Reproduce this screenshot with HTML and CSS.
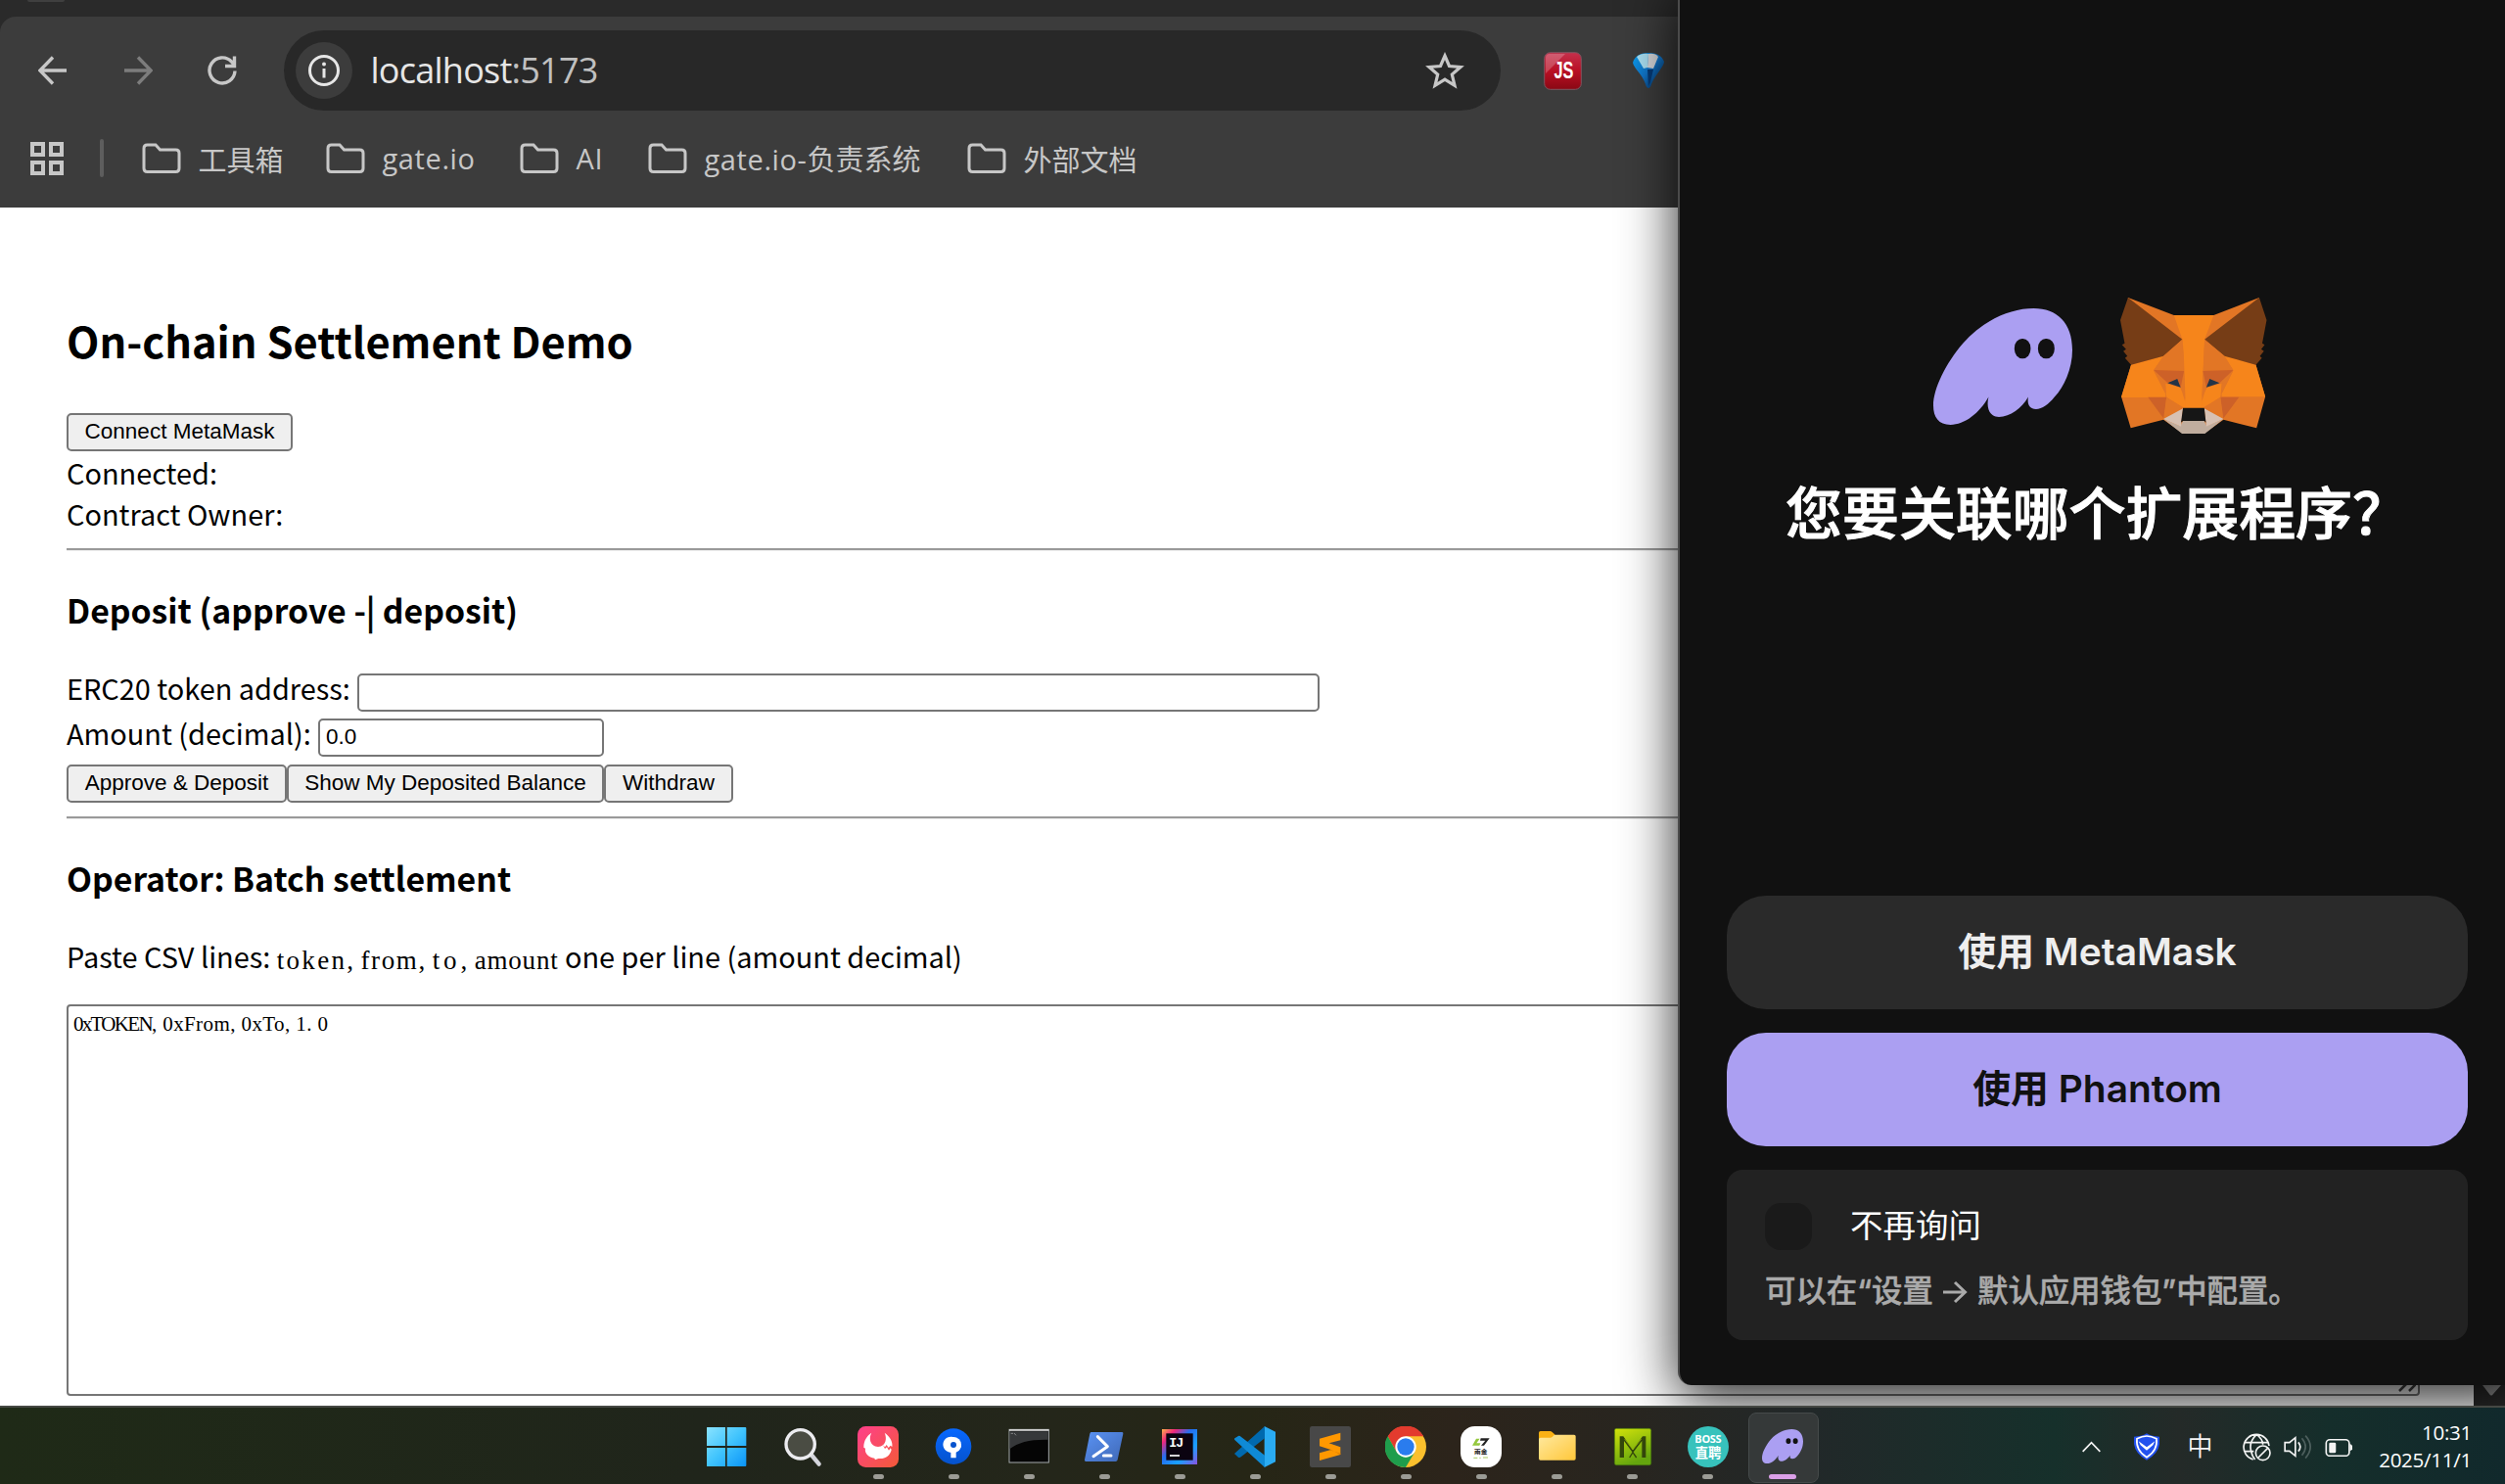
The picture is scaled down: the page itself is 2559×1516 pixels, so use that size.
FILE: index.html
```html
<!DOCTYPE html>
<html lang="zh-CN">
<head>
<meta charset="utf-8">
<title>On-chain Settlement Demo</title>
<link rel="stylesheet" href="styles.css">
</head>
<body>
<svg width="0" height="0" class="defs">
  <defs>
    <symbol id="folder" viewBox="0 0 40 32"><path d="M2 5.5Q2 2 5.5 2H14l4.500 5H34.500Q38 7 38 10.500V26Q38 29.500 34.500 29.500H5.500Q2 29.500 2 26Z" fill="none" stroke="#c7c7c7" stroke-width="3"/></symbol>
    <symbol id="ghost" viewBox="102 105 413 356" preserveAspectRatio="none">
      <path fill="#ab9ff2" d="M102 402C102 350 140 272 190 212C250 142 330 105 400 105C470 105 515 150 515 232C515 290 490 345 462 376C445 398 425 413 407 413C388 413 380 398 384 376C365 410 330 437 297 437C270 437 258 410 266 376C240 425 195 461 153 461C118 461 102 438 102 402Z"/>
      <rect x="343" y="198" width="48" height="60" rx="23" ry="28" fill="#111"/><rect x="413" y="198" width="49" height="60" rx="23" ry="28" fill="#111"/>
    </symbol>
  </defs>
</svg>
<div class="screen">
  <div class="browser">
    <div class="tabstrip"><span class="tabstub"></span></div>
    <header class="chrome">
      <div class="toolbar">
        <svg class="nav" viewBox="0 0 30 30"><path d="M29 15H2M15 1.500L1.800 15L15 28.500" /></svg>
        <svg class="nav off" viewBox="0 0 30 30"><path d="M1 15H28M15 1.500L28.200 15L15 28.500"/></svg>
        <svg class="nav" viewBox="0 0 30 30"><path d="M28 15.500A13 13 0 1 1 24.500 6L27 9M27.500 .5V10.500H18"/></svg>
        <div class="omnibox">
          <span class="info"><svg width="34" height="34" viewBox="0 0 34 34"><circle cx="17" cy="17" r="14.500" fill="none" stroke="#e6e6e6" stroke-width="3"/><path d="M17 15V24.500" stroke="#e6e6e6" stroke-width="3"/><circle cx="17" cy="10.500" r="2" fill="#e6e6e6"/></svg></span>
          <span class="url">localhost<span class="port">:5173</span></span>
          <svg class="star" viewBox="0 0 40 38"><path d="M20 4L24.500 14.500L36 15.500L27.300 23L30 34.300L20 28.200L10 34.300L12.700 23L4 15.500L15.500 14.500Z" fill="none" stroke="#c7c7c7" stroke-width="3.200"/></svg>
        </div>
        <svg class="ext-js" viewBox="0 0 39 39"><defs><linearGradient id="jr" x1="0" y1="0" x2="0" y2="1"><stop offset="0" stop-color="#c4304c"/><stop offset=".5" stop-color="#b90f24"/><stop offset="1" stop-color="#8a0814"/></linearGradient></defs><rect x=".7" y=".7" width="37.600" height="37.600" rx="6" fill="url(#jr)" stroke="#7d5560"/><path d="M2 6Q2 2 6 2H22L2 22Z" fill="#fff" opacity=".22"/><g transform="translate(10.500 27) scale(.68 1)"><text class="js">JS</text></g></svg>
        <svg class="ext-gem" viewBox="0 0 34 36"><defs><linearGradient id="gb" x1="0" y1="0" x2="1" y2="1"><stop offset="0" stop-color="#0a9ff0"/><stop offset=".5" stop-color="#1174c8"/><stop offset="1" stop-color="#02254f"/></linearGradient></defs><path d="M1 10C3 3 9 0 17 0S31 3 33 9C33 14 24 22 20 32Q19 36 17 36T14 32C11 22 2 16 1 10Z" fill="url(#gb)"/><path d="M5 4Q10 0 17 1L16 15L12 16Z" fill="#a9dff2"/><path d="M17 1Q24 0 27 4L22 16L16 15Z" fill="#d5d7da"/><path d="M16 17L22 17L19 30L17 34Z" fill="#063a76"/></svg>
      </div>
      <nav class="bookmarks">
        <svg class="apps" viewBox="0 0 34 34"><path d="M2 2H13V13H2ZM21 2H32V13H21ZM2 21H13V32H2ZM21 21H32V32H21Z" fill="none" stroke="#c7c7c7" stroke-width="4"/></svg>
        <span class="sep"></span>
        <a class="bm b1"><svg><use href="#folder"/></svg><span>工具箱</span></a>
        <a class="bm b2"><svg><use href="#folder"/></svg><span class="lat">gate.io</span></a>
        <a class="bm b3"><svg><use href="#folder"/></svg><span class="lat">AI</span></a>
        <a class="bm b4"><svg><use href="#folder"/></svg><span><i class="lat">gate.io-</i>负责系统</span></a>
        <a class="bm b5"><svg><use href="#folder"/></svg><span>外部文档</span></a>
      </nav>
    </header>
    <main class="page">
      <h2>On-chain Settlement Demo</h2>
      <button class="connect">Connect MetaMask</button>
      <div class="line">Connected:</div>
      <div class="line">Contract Owner:</div>
      <hr>
      <h3>Deposit (approve -<span class="bar">|</span> deposit)</h3>
      <div class="field f1"><label>ERC20 token address:</label><input class="wide" type="text"></div>
      <div class="field f2"><label>Amount (decimal):</label><input type="text" value="0.0"></div>
      <div class="btns"><button>Approve &amp; Deposit</button><button>Show My Deposited Balance</button><button>Withdraw</button></div>
      <hr class="second">
      <h3>Operator: Batch settlement</h3>
      <p>Paste CSV lines: <code><span class="k5">token</span><b>,</b><span class="k4">from</span><b>,</b><span class="k2">to</span><b>,</b><span class="k6">amount</span></code> one per line (amount decimal)</p>
      <div class="textarea" role="textbox" aria-multiline="true"><span class="caps">0xTOKEN</span><b>,</b>0xFrom<b>,</b>0xTo<b>,</b>1<b>.</b>0<svg class="grip" width="18" height="14" viewBox="0 0 18 14"><path d="M1 13L12 2M11 13L18 6" stroke="#444" stroke-width="2.500"/></svg></div>
      <div class="scrollbar"><svg width="32" height="21" viewBox="0 0 32 21"><path d="M9 0H28L20 9Q18 12 16 9Z" fill="#9a9a9a"/></svg></div>
    </main>
  </div>

  <section class="popup">
    <div class="logos">
      <svg class="ghost"><use href="#ghost"/></svg>
      <svg class="fox" viewBox="656 72 434 417" preserveAspectRatio="none">
        <path fill="#e27625" d="M679 72L815 126H933L1068 72L1058 278L1086 376L1060 472L962 446L907 487H839L784 446L687 472L659 376L688 278Z"/>
        <path fill="#f6851b" d="M815 126H933L906 200L904 240L898 380L905 412H842L849 380L844 240L840 200Z"/>
        <path fill="#f6851b" d="M688 278L784 251L755 296L790 366V378H659ZM1058 278L965 251L991 296L957 366V376H1086ZM790 335L833 347L848 376V412L793 377ZM957 335L914 347L898 376V412L953 377Z"/>
        <path fill="#763d16" d="M679 72L840 200L784 251L688 278L670 257L677 251L665 236L673 230L661 217L669 212L656 141ZM1068 72L906 200L965 251L1058 278L1076 257L1070 251L1082 236L1074 230L1084 217L1077 212L1090 141Z"/>
        <path fill="#cd6128" d="M738 377H793L786 445ZM1008 377H953L960 445Z"/>
        <path fill="#e27625" d="M840 200L784 251L755 294L845 297L848 390ZM906 200L965 251L991 294L901 297L898 390ZM755 294L790 366V335ZM991 294L957 366V335ZM835 347L845 297L848 390ZM911 347L901 297L898 390ZM793 377L843 412L784 444ZM953 377L903 412L962 444Z"/>
        <path fill="#cd6128" d="M755 294L845 297L835 347L824 321L796 333ZM991 294L901 297L911 347L921 321L951 333Z"/>
        <path fill="#233447" d="M796 334L825 321L835 347ZM951 334L921 321L911 347Z"/>
        <path fill="#c0ad9e" d="M784 444L834 466L842 450H905L912 466L962 444L907 489H839Z"/>
        <path fill="#d7c1b3" d="M784 444L842 412L836 467ZM962 444L905 412L911 467Z"/>
        <path fill="#161616" d="M842 410H905L910 455L905 450H842L836 455Z"/>
      </svg>
    </div>
    <h1>您要关联哪个扩展程序？</h1>
    <button class="choice dark">使用 MetaMask</button>
    <button class="choice violet">使用 Phantom</button>
    <div class="card">
      <div class="ask"><span class="check"></span><span class="never">不再询问</span></div>
      <div class="hint">可以在<i>“</i>设置 <svg width="25" height="24" viewBox="0 0 25 24"><path d="M0 12H22M12 2L22.500 12L12 22" fill="none" stroke="#aaa" stroke-width="3"/></svg> 默认应用钱包<i>”</i>中配置。</div>
    </div>
  </section>

  <footer class="taskbar">
    <div class="apps-row">
      <div class="app"><svg viewBox="64 84 126 126"><defs><linearGradient id="w" x1="0" y1="0" x2="1" y2="1"><stop offset="0" stop-color="#8be3ff"/><stop offset=".5" stop-color="#41c4fd"/><stop offset="1" stop-color="#0a94f8"/></linearGradient></defs><path fill="url(#w)" d="M66 87H121V144H63V90Q63 87 66 87ZM126 87H182Q185 87 185 90V144H126ZM63 150H121V207H66Q63 207 63 204ZM126 150H185V204Q185 207 182 207H126Z"/></svg></div>
      <div class="app"><svg viewBox="297 81 126 126"><path d="M386 168L410 197" stroke="#d4d5dc" stroke-width="13" stroke-linecap="round"/><circle cx="353" cy="136" r="44" fill="#4a4c43" stroke="#ececf0" stroke-width="10"/></svg></div>
      <div class="app run"><svg viewBox="528 81 126 126"><defs><linearGradient id="fr" x1="0" y1="0" x2="1" y2="1"><stop offset="0" stop-color="#ff3f8b"/><stop offset="1" stop-color="#f35a38"/></linearGradient></defs><rect x="528" y="81" width="126" height="126" rx="25" fill="url(#fr)"/><path fill="#fff" d="M571 101C562 116 565 142 591 144C617 142 618 116 611 101C628 112 637 130 634 144L629 140L623 147L617 138L612 145L606 139L612 150L618 145L624 155L629 148L632 153C628 172 612 182 592 180L582 184L580 179C562 176 549 163 552 149L547 146C547 124 557 110 571 101Z"/></svg></div>
      <div class="app run"><svg viewBox="759 81 126 126"><defs><linearGradient id="st" x1="0" y1="0" x2="0" y2="1"><stop offset="0" stop-color="#0868ff"/><stop offset="1" stop-color="#0552cc"/></linearGradient></defs><circle cx="822" cy="143" r="55" fill="url(#st)"/><path d="M830 155A24 24 0 1 0 814 161V178H830V160Q846 153 846 138" fill="#fff"/><circle cx="822" cy="138" r="24" fill="#fff"/><circle cx="822" cy="138" r="9" fill="#0753ce"/></svg></div>
      <div class="app run"><svg viewBox="988 81 126 126"><rect x="991" y="91" width="121" height="101" fill="#050505" stroke="#a4a9ac" stroke-width="3"/><path d="M993 97H1110V122Q1030 120 993 150Z" fill="#36383a"/><path d="M991 93H1112" stroke="#e8e8e8" stroke-width="5"/><path d="M996 103H1003M1006 102L1012 109" stroke="#aaa" stroke-width="2"/></svg></div>
      <div class="app run"><svg viewBox="51 81 126 126"><defs><linearGradient id="ps" x1="0" y1="0" x2="1" y2="1"><stop offset="0" stop-color="#5a93f5"/><stop offset="1" stop-color="#3f68b5"/></linearGradient></defs><path d="M74 99H169Q173 99 172 104L155 184Q154 189 149 189H58Q53 189 54 184L70 104Q71 99 74 99Z" fill="url(#ps)"/><path d="M94 113L124 143L81 173M112 171H135" fill="none" stroke="#fff" stroke-width="9" stroke-linecap="round" stroke-linejoin="round"/></svg></div>
      <div class="app run"><svg viewBox="282 81 126 126"><defs><linearGradient id="ij" x1="0" y1="0" x2="1" y2="1"><stop offset="0" stop-color="#ffb24a"/><stop offset=".2" stop-color="#f0267c"/><stop offset=".42" stop-color="#256ef0"/><stop offset=".7" stop-color="#18a0ff"/><stop offset="1" stop-color="#8c52e0"/></linearGradient></defs><rect x="291" y="90" width="108" height="108" fill="url(#ij)"/><rect x="304" y="103" width="82" height="82" fill="#0b0310"/><path d="M315 171H345" stroke="#fff" stroke-width="5"/><text x="313" y="144" class="ij">IJ</text></svg></div>
      <div class="app run"><svg viewBox="513 81 126 126"><path d="M605 81L639 98V190L605 207Z" fill="#2aabf2"/><path d="M513 165L525 176Q529 178 533 175L606 118V81Z" fill="#0069ae"/><path d="M514 118L525 111Q529 109 533 113L606 170V207L514 123Q512 120 514 118Z" fill="#0f8ad6"/></svg></div>
      <div class="app run"><svg viewBox="744 81 126 126"><rect x="744" y="81" width="126" height="126" rx="7" fill="#484848"/><path fill="#ff9800" d="M774 119L838 101V124L803 133L838 145V168L774 186V163L809 153L774 142Z"/><path d="M803 153L838 164L838 168L809 153Z" fill="#d87a00"/></svg></div>
      <div class="app run"><svg viewBox="975 81 126 126"><circle cx="1038" cy="144" r="63" fill="#fbc02d"/><path d="M1038 112H1093A63 63 0 0 0 983 112L1010 160Z" fill="#e33b2e"/><path d="M983 112A63 63 0 0 0 1038 207L1066 160L1038 176L1010 160Z" fill="#1f9d4c"/><circle cx="1038" cy="144" r="32" fill="#fff"/><circle cx="1038" cy="144" r="26" fill="#2a7cee"/></svg></div>
      <div class="app run"><svg viewBox="36 81 126 126"><rect x="36" y="81" width="126" height="126" rx="44" fill="#fff"/><path d="M84 119H95L85 133H97L94 140H72Z" fill="#94c83d"/><path d="M98 118H125L108 140H99L112 125H96Z" fill="#222"/><path d="M76 178H88M94 178H98M105 177H120" stroke="#a9cc62" stroke-width="3"/><text x="78" y="165" class="yu" textLength="40" lengthAdjust="spacingAndGlyphs">雨金</text></svg></div>
      <div class="app run"><svg viewBox="267 81 126 126"><defs><linearGradient id="fo" x1="0" y1="0" x2="1" y2="1"><stop offset="0" stop-color="#ffe9a0"/><stop offset="1" stop-color="#ffc73a"/></linearGradient></defs><path d="M278 96H307Q311 96 314 99L324 108V125H273V101Q273 96 278 96Z" fill="#fbb114"/><path d="M278 116H308Q312 116 315 113L319 109Q321 107 325 107H381Q386 107 386 112V180Q386 185 381 185H278Q273 185 273 180V121Q273 116 278 116Z" fill="url(#fo)"/></svg></div>
      <div class="app run"><svg viewBox="498 81 126 126"><defs><linearGradient id="mm" x1="0" y1="0" x2=".4" y2="1"><stop offset="0" stop-color="#d3e20a"/><stop offset="1" stop-color="#64a50e"/></linearGradient></defs><rect x="505" y="88" width="112" height="112" rx="6" fill="url(#mm)" stroke="#42720c" stroke-width="2"/><path d="M521 112H532L561 153L591 112H601V177H589V126L561 163L534 126V177H521Z" fill="#33460b"/><path d="M551 177L561 161L572 177" fill="none" stroke="#33460b" stroke-width="4"/><path d="M536 120L561 153L587 120" fill="none" stroke="#a8c60b" stroke-width="2"/></svg></div>
      <div class="app run"><svg viewBox="729 81 126 126"><circle cx="792" cy="144" r="63" fill="#37c2bc"/><text x="792" y="132" text-anchor="middle" class="boss" textLength="82">BOSS</text><text x="792" y="177" text-anchor="middle" class="zhi" textLength="80">直聘</text></svg></div>
      <div class="app run active"><svg class="g"><use href="#ghost"/></svg></div>
    </div>
    <div class="tray">
      <svg class="t1" viewBox="112 184 58 36"><path d="M114 217L141 189L168 217" fill="none" stroke="#f4f4f4" stroke-width="5"/></svg>
      <svg class="t2" viewBox="270 162 78 82"><path d="M309 162Q325 172 348 172V195Q344 225 309 244Q274 225 270 195V172Q293 172 309 162Z" fill="#2351ee"/><path d="M279 178Q295 170 309 170T339 178Q343 215 309 235Q275 215 279 178Z" fill="#2351ee" stroke="#fff" stroke-width="5"/><path d="M284 186L309 204L334 186L328 198L309 214L290 198Z" fill="#fff"/></svg>
      <span class="ime">中</span>
      <svg class="t3" viewBox="602 161 87 87" fill="none" stroke="#f4f4f4" stroke-width="5"><path d="M634 242A39 39 0 1 1 683 200M608 190H680M608 217H636M645 165Q620 188 628 217Q632 234 640 242M645 165Q664 180 664 196"/><circle cx="664" cy="222" r="22"/><path d="M650 236L679 207"/></svg>
      <svg class="t4" viewBox="728 165 86 78" fill="none" stroke="#f4f4f4" stroke-width="5"><path d="M731 191H745L763 176V232L745 217H731ZM772 190Q784 204 772 218"/><path d="M783 178Q805 204 783 230M794 170Q824 204 794 239" stroke="#4d5f5d"/></svg>
      <svg class="t5" viewBox="853 175 86 57"><rect x="857" y="180" width="71" height="50" rx="11" fill="none" stroke="#f4f4f4" stroke-width="5"/><rect x="866" y="189" width="21" height="32" rx="4" fill="#f4f4f4"/><path d="M930 193Q939 197 939 204T930 215Z" fill="#f4f4f4"/></svg>
      <div class="clock"><div class="time">10:31</div><div class="date">2025/11/1</div></div>
    </div>
  </footer>
</div>
</body>
</html>
```

FILE: styles.css
```css
* { box-sizing: border-box; }
body { margin: 0; background: #fff; font-family: "Noto Sans CJK SC", sans-serif; }
i { font-style: normal; }
.defs { position: absolute; }
.screen { position: relative; width: 2559px; height: 1516px; overflow: hidden; display: flex; flex-direction: column; }

/* browser window */
.browser { height: 1436px; background: #2a2a2a; }
.tabstrip { height: 17px; padding-left: 28px; }
.tabstub { display: block; width: 38px; height: 2px; background: #3f3f3f; border-radius: 0 0 4px 4px; }
.chrome { height: 195px; background: #3c3c3c; border-radius: 16px 0 0 0; }
.toolbar { display: flex; align-items: center; padding: 14px 0 0 39px; height: 96px; }
.nav { width: 30px; height: 30px; margin-right: 56.500px; fill: none; stroke: #c7c7c7; stroke-width: 3.400; flex: none; }
.nav.off { stroke: #7d7d7d; }
.omnibox { display: flex; align-items: center; width: 1243px; height: 82px; border-radius: 41px; background: #282828; margin-left: -8.500px; padding: 0 37px 0 12px; flex: none; }
.info { width: 58px; height: 58px; border-radius: 50%; background: #3c3c3c; display: flex; align-items: center; justify-content: center; }
.url { font: 36px/50px "Open Sans", sans-serif; color: #e6e6e6; margin-left: 18.500px; letter-spacing: -.750px; flex: 1; padding-bottom: 1px; }
.port { color: #c0c0c0; }
.star { width: 40px; height: 38px; }
.ext-js { width: 39px; height: 39px; margin-left: 44px; }
.js { font: 700 24px "Liberation Sans", sans-serif; fill: #fff; }
.ext-gem { width: 34px; height: 36px; margin-left: 51px; }
.bookmarks { display: flex; align-items: center; height: 99px; padding: 0 0 2px 31px; }
.apps { width: 34px; height: 34px; }
.sep { width: 4px; height: 39px; border-radius: 2px; background: #5d5d5d; margin: 0 38.500px 0 37px; }
.bm { display: flex; align-items: center; color: #c7c7c7; font-size: 29px; line-height: 42px; white-space: nowrap; }
.bm svg { width: 40px; height: 32px; margin-right: 18px; }
.lat { font-family: "Open Sans", sans-serif; letter-spacing: .600px; }
.b1 { width: 188px; } .b2 { width: 198px; } .b3 { width: 131px; } .b4 { width: 326px; }

/* page content */
.page { position: relative; height: 1224px; background: #fff; padding: 104px 87px 0 68px; color: #000; font-size: 28.900px; overflow: hidden; }
h2 { margin: 0 0 44px; font-size: 43.400px; line-height: 62px; }
button, input { font: 22.500px/28px "Liberation Sans", Arial, sans-serif; color: #000; }
.page button { display: block; height: 39px; padding: 0 0 2px; border: 2px solid #767676; border-radius: 5px; background: #efefef; line-height: 33px; white-space: nowrap; }
.page .connect { width: 231px; }
.line { height: 42px; line-height: 43px; }
hr { margin: 15px 0 35px; height: 3px; border: 0; border-top: 2px solid #9a9a9a; background: #eee; }
h3 { margin: 0; font-size: 33.800px; line-height: 49px; }
.bar { font-weight: 400; -webkit-text-stroke: 1px #000; }
.field { display: flex; line-height: 43px; }
.f1 { height: 46px; margin-top: 34px; }
.f2 { height: 54px; }
.f1 label { width: 297px; } .f2 label { width: 257px; }
.field input { width: 292px; height: 39px; margin-top: 7px; padding: 0 6px 1px; border: 2px solid #767676; border-radius: 5px; background: #fff; }
.field .wide { width: 983px; }
.btns { display: flex; }
.btns button { width: 225px; }
.btns button + button { width: 324px; }
.btns button:last-child { width: 132px; }
hr.second { margin: 14px 0 35px; }
p { margin: 34px 0 29px; line-height: 43px; height: 42px; white-space: nowrap; }
code { font: 27px/42px "Liberation Serif", serif; position: relative; top: 1px; }
code b, .textarea b { font-weight: 400; letter-spacing: 7.500px; }
.k5 { letter-spacing: 2.300px; } .k4 { letter-spacing: 1.600px; } .k2 { letter-spacing: 3.900px; } .k6 { letter-spacing: .800px; }
.textarea { position: relative; width: 2404px; height: 400px; padding: 4px 5px; border: 2px solid #767676; border-radius: 4px; background: #fff; color: #000; font: 21px/28px "Liberation Serif", serif; letter-spacing: .400px; }
.textarea b { letter-spacing: 6.100px; }
.caps { letter-spacing: -1.700px; }
.grip { position: absolute; right: 2px; bottom: 2px; }
.scrollbar { position: absolute; right: 0; bottom: 0; width: 32px; height: 100%; background: #2c2c2c; display: flex; align-items: flex-end; }

/* wallet chooser window */
.popup { position: absolute; left: 1714px; top: -20px; width: 870px; height: 1435px; padding: 324px 64px 0 48px; background: #111; border-left: 2px solid #4b4b4b; border-radius: 0 0 0 14px; box-shadow: 0 14px 56px rgba(0,0,0,.86); display: flex; flex-direction: column; }
.popup > * { width: 757px; }
.logos { height: 140px; display: flex; padding-left: 211px; }
.ghost { width: 142px; height: 119px; margin: 11px 49px 0 0; }
.fox { width: 149.500px; height: 139px; }
h1 { margin: 35px 0 3px; height: 84px; line-height: 84px; font-size: 57.900px; font-weight: 500; color: #fff; -webkit-text-stroke: 1px #fff; text-align: center; white-space: nowrap; }
.choice { height: 116px; border: 0; border-radius: 40px; font: 600 38.900px/58px Inter, "Noto Sans CJK SC", sans-serif; padding: 0 0 2px; }
.dark { margin-top: 349px; background: #2a2a2a; color: #eee; }
.violet { margin-top: 24px; background: #ab9ff2; color: #111; }
.card { margin-top: 24px; height: 174px; border-radius: 16px; background: #222; padding: 34px 39px; }
.ask { display: flex; align-items: flex-start; gap: 39px; height: 48px; color: #fff; font-size: 33.500px; line-height: 42px; }
.check { width: 48px; height: 48px; border-radius: 16px; background: #1a1a1a; }
.hint { margin-top: 17px; line-height: 46px; font-size: 31.400px; color: #aaa; -webkit-text-stroke: .500px #aaa; font-weight: 500; white-space: nowrap; }
.hint i { font-family: Inter, sans-serif; }
.hint svg { margin: 0 3px; vertical-align: -2px; }

/* taskbar */
.taskbar { position: relative; height: 80px; border-top: 2px solid #454843; background: linear-gradient(90deg,#1f2a17 0,#20251b 28%,#24261a 42%,#262616 50%,#2c241b 58%,#28251f 65%,#222829 72%,#16302b 82%,#242a28 87%,#152e2b 93%,#11292c 100%); display: flex; }
.apps-row { display: flex; margin-left: 704.500px; }
.app { width: 77.050px; height: 78px; display: flex; align-items: flex-start; justify-content: center; padding-top: 19px; position: relative; }
.app svg { width: 42px; height: 42px; }
.run::after { content: ""; position: absolute; left: 33px; top: 68px; width: 11px; height: 5px; border-radius: 3px; background: #9b9b95; }
.active::before { content: ""; position: absolute; left: 2.500px; top: 5px; width: 70px; height: 70px; border: 1px solid #454a4a; border-radius: 8px; background: #353939; }
.active svg { position: relative; height: 35px; margin: 3px 2px 0 0; }
.active::after { left: 23.500px; width: 28px; background: #dba0e8; }
.ij { font: 700 40px "Liberation Mono", monospace; fill: #fff; letter-spacing: -3px; }
.yu { font: 700 18px "Noto Sans CJK SC", sans-serif; fill: #222; }
.boss { font: 700 33px "Noto Sans", sans-serif; fill: #fff; }
.zhi { font: 700 40px "Noto Sans CJK SC", sans-serif; fill: #fff; }
.tray { display: flex; align-items: center; margin-left: auto; padding-right: 34px; height: 80px; }
.t1 { width: 19px; height: 12px; } .t2 { width: 26px; height: 28px; margin-left: 34px; }
.ime { width: 26px; margin: 0 30px 4px 29px; font-size: 26px; font-weight: 350; line-height: 30px; color: #f4f4f4; }
.t3 { width: 29px; height: 29px; } .t4 { width: 29px; height: 26px; margin-left: 13px; } .t5 { width: 28.500px; height: 19px; margin-left: 13px; }
.clock { margin-left: 27px; width: 95px; padding-bottom: 3px; text-align: right; font: 20.500px/28px "Open Sans", sans-serif; letter-spacing: -.250px; color: #fff; white-space: nowrap; }
```
